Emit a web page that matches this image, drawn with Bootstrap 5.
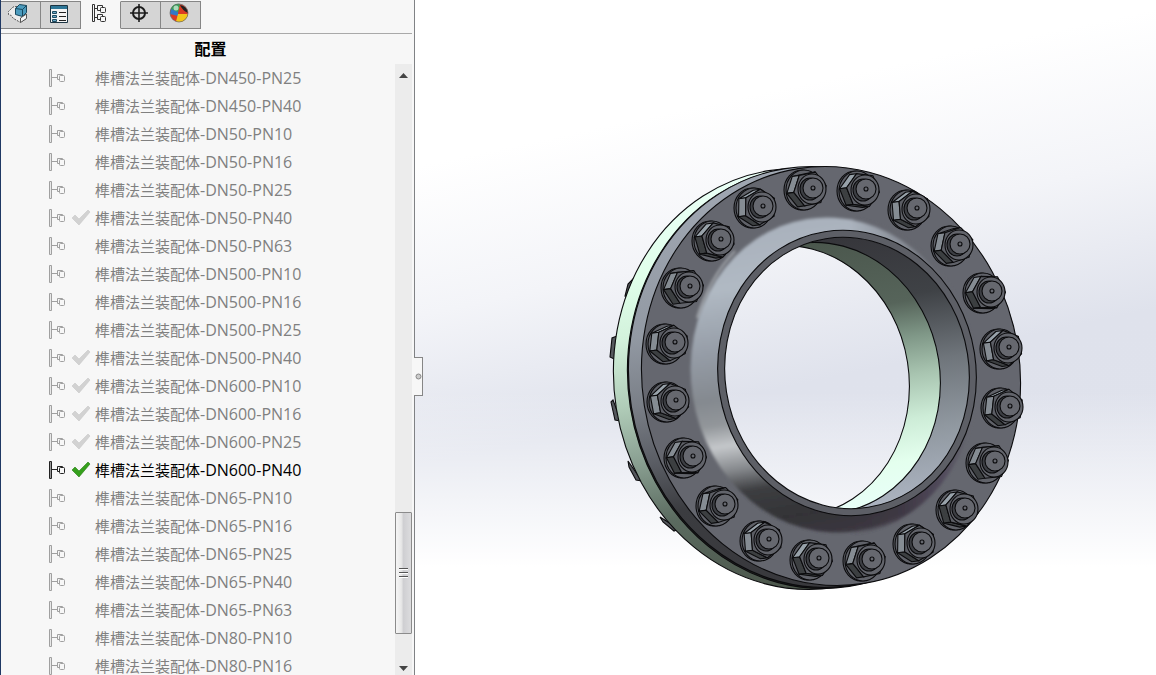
<!DOCTYPE html>
<html lang="zh-CN">
<head>
<meta charset="utf-8">
<meta name="viewport" content="width=device-width, initial-scale=1">
<title>配置</title>
<link href="https://cdn.jsdelivr.net/npm/bootstrap@5.3.0/dist/css/bootstrap.min.css" rel="stylesheet">
<style>
body { font-family: "Open Sans", "Noto Sans CJK SC", sans-serif; color: #000; background: #fff; }
.manager { flex: 0 0 415px; background: #f7f7f7; border-left: 1px solid #1f3864; border-right: 1px solid #808285; }
.tabs { height: 34px; margin-right: 2px; border-bottom: 1px solid #a9a9a9; }
.tab-btn { width: 40px; height: 28px; margin-top: 1px; padding: 0 3px 0 0; background: #d5d5d5; border: 1px solid #868686; border-left: 0; }
.tab-btn.active { background: #f7f7f7; border-color: #f7f7f7; border-right-color: #868686; }
.panel-title { font-size: 16px; line-height: 30px; padding-left: 6px; }
.config-row { height: 28px; padding-left: 47px; color: #808080; font-size: 16px; line-height: 18px; white-space: nowrap; }
.config-row .part { font-size: 15px; }
.config-row .mark-slot { width: 20px; margin: 0 4px 0 3px; }
.config-row .tree-glyph { stroke: #a0a0a0; fill: #e9e9e9; }
.config-row.current { color: #000; }
.config-row.current .tree-glyph { stroke: #222; fill: #999; }
.scrollbar { flex: 0 0 17px; margin-right: 2px; background: #ececec; }
.scroll-btn { height: 18px; background: transparent; }
.above { flex: 431 1 0; }
.below { flex: 23 1 0; }
.thumb { flex: 121 1 0; border: 1px solid #8b8b8b; border-radius: 1px; background: linear-gradient(90deg, #f5f5f5, #e8e8e8 35%, #cfcfd2 50%, #dcdcde); }
.viewport { background: linear-gradient(180deg, transparent 58%, #fff 84%), linear-gradient(168deg, #fff 20%, #f3f4f8 38%, #dfe2ec 56%, #e0e3ed 100%); }
.splitter { left: -1px; top: 53%; width: 9px; height: 39px; margin-top: -1px; background: #f7f7f7; border: 1px solid #868686; border-left: 0; }
.line { stroke: #0b0b0d; stroke-width: 1.1; }
</style>
</head>
<body>
<div class="d-flex vh-100 overflow-hidden">
  <aside class="manager d-flex flex-column overflow-hidden">
    <nav class="tabs d-flex align-items-start flex-shrink-0" aria-label="管理器">
      <button class="tab-btn d-flex justify-content-center" type="button" aria-label="设计树">
        <svg width="24" height="24" viewBox="0 0 24 24"><path d="M10 4.500 6 5 1.500 9.500v3l2 .500 3 3.500 7 4 6-4v-4" fill="#ececec" stroke="#555" stroke-dasharray="2 1"/><path d="M8.500 6.500l4-4 7 1v7l-4 4-7-2z" fill="#4c9bbd" stroke="#17485f"/><path d="M8.500 6.500l7 1 4-4M15.500 7.500v7" fill="none" stroke="#17485f"/><path d="M13.500 16v4.500l6-4V12z" fill="#f6f6f6" stroke="#555"/></svg>
      </button>
      <button class="tab-btn d-flex justify-content-center" type="button" aria-label="属性">
        <svg width="24" height="24" viewBox="0 0 24 24"><path d="M3.500 3.500h17v17h-17z" fill="#f4f4f4" stroke="#1c3442"/><path d="M4 4h16v3H4z" fill="#2d7697"/><path d="M5.500 9.500h4v2h-4zM5.500 13.500h4v2h-4zM5.500 17.500h4v2h-4z" fill="#69a8c4" stroke="#1e4a60"/><path d="M12 10.500h7M12 14.500h7M12 18.500h7" stroke="#222"/></svg>
      </button>
      <button class="tab-btn active d-flex justify-content-center" type="button" aria-label="配置">
        <svg width="24" height="24" viewBox="0 0 24 24" fill="#f7f7f7" stroke="#333"><path d="M5.500 2.500h2v17h-2zM7.500 6.500h4M7.500 15.500h4"/><path d="M10.500 3.500h5v5h-5zM10.500 12.500h5v5h-5z"/><rect x="13.500" y="5.500" width="5" height="5" rx="1"/><rect x="13.500" y="14.500" width="5" height="5" rx="1"/></svg>
      </button>
      <button class="tab-btn d-flex justify-content-center" type="button" aria-label="尺寸专家">
        <svg width="24" height="24" viewBox="0 0 24 24" fill="none" stroke="#1c1c1c" stroke-width="2"><circle cx="12" cy="11" r="6"/><path d="M12 2v18M3 11h18" stroke-width="1.600"/></svg>
      </button>
      <button class="tab-btn d-flex justify-content-center" type="button" aria-label="外观">
        <svg width="24" height="24" viewBox="0 0 24 24"><circle cx="12" cy="11" r="9" fill="#db3b24"/><path d="M11 11 3.500 7A9 9 0 0 1 13 2z" fill="#35a65a"/><path d="M11 10 4 7a9 9 0 0 0-1 5l8 2z" fill="#3279c7"/><path d="M11 12 9 19.500A9 9 0 0 0 21 12z" fill="#f3c51a"/><path d="M13 3q7 1 8 8-6-3-8-8z" fill="#222"/><circle cx="12" cy="11" r="9" fill="none" stroke="#666" stroke-width=".7"/><circle cx="9" cy="6" r="2.500" fill="#fff" opacity=".6"/></svg>
      </button>
    </nav>
    <h1 class="panel-title fw-bold text-center m-0 flex-shrink-0">配置</h1>
    <div class="d-flex flex-grow-1 overflow-hidden">
      <ul id="configs" class="list-unstyled m-0 flex-grow-1"></ul>
      <div class="scrollbar d-flex flex-column">
        <button class="scroll-btn border-0 p-0 pt-1 d-flex justify-content-center align-items-center" type="button" aria-label="向上滚动"><svg width="9" height="5"><path d="M0 5 4.500 0 9 5z" fill="#444"/></svg></button>
        <div class="above"></div>
        <div class="thumb d-flex align-items-center justify-content-center"><svg width="9" height="12"><path d="M0 1.500h9M0 5.500h9M0 9.500h9" stroke="#555"/><path d="M0 2.500h9M0 6.500h9M0 10.500h9" stroke="#fff"/></svg></div>
        <div class="below"></div>
        <button class="scroll-btn border-0 p-0 pt-1 d-flex justify-content-center align-items-center" type="button" aria-label="向下滚动"><svg width="9" height="5"><path d="M0 0h9L4.500 5z" fill="#444"/></svg></button>
      </div>
    </div>
  </aside>
  <main class="viewport position-relative flex-grow-1">
    <button class="splitter position-absolute p-0 d-flex align-items-center justify-content-center" type="button" aria-label="折叠面板"><svg width="7" height="7"><circle cx="3.500" cy="3.500" r="2.500" fill="#ccc" stroke="#888"/></svg></button>
    <svg class="d-block w-100 h-100" viewBox="415 0 741 675" role="img" aria-label="榫槽法兰装配体">
      <defs>
        <linearGradient id="mint" x2="0" y2="1"><stop offset="0" stop-color="#eafff6"/><stop offset=".2" stop-color="#e0ffea"/><stop offset=".34" stop-color="#d3f2dc"/><stop offset=".5" stop-color="#b0ccb8"/><stop offset=".63" stop-color="#8ba193"/><stop offset=".78" stop-color="#5b6b60"/><stop offset="1" stop-color="#4a5449"/></linearGradient>
        <linearGradient id="rim" x2="0" y2="1"><stop offset="0" stop-color="#a0a7b2"/><stop offset=".34" stop-color="#9299a3"/><stop offset=".5" stop-color="#7a7f87"/><stop offset=".64" stop-color="#5a5d64"/><stop offset=".76" stop-color="#3b3c40"/><stop offset="1" stop-color="#38383c"/></linearGradient>
        <linearGradient id="hub" x2="0" y2="1"><stop offset="0" stop-color="#a9b1bc"/><stop offset=".18" stop-color="#b0b9c3"/><stop offset=".38" stop-color="#949ba5"/><stop offset=".52" stop-color="#84898f"/><stop offset=".6" stop-color="#92969a"/><stop offset=".67" stop-color="#c4c7ca"/><stop offset=".75" stop-color="#84878b"/><stop offset=".82" stop-color="#3c3d40"/><stop offset=".92" stop-color="#333336"/><stop offset="1" stop-color="#3b3740"/></linearGradient>
        <linearGradient id="fadeTop" gradientUnits="userSpaceOnUse" x1="850" y1="0" x2="950" y2="0"><stop offset="0" stop-color="#65676f" stop-opacity="0"/><stop offset="1" stop-color="#65676f"/></linearGradient>
        <linearGradient id="fadeBottom" gradientUnits="userSpaceOnUse" x1="850" y1="0" x2="970" y2="0"><stop offset="0" stop-color="#3b3540" stop-opacity="0"/><stop offset=".45" stop-color="#3f3945"/><stop offset=".75" stop-color="#50495a"/><stop offset="1" stop-color="#65676f"/></linearGradient>
        <linearGradient id="bore" x2="0" y2="1"><stop offset="0" stop-color="#36363b"/><stop offset=".25" stop-color="#3f4246"/><stop offset=".5" stop-color="#6f757b"/><stop offset=".75" stop-color="#9098a0"/><stop offset="1" stop-color="#abb3c0"/></linearGradient>
        <linearGradient id="mintBore" x2="0" y2="1"><stop offset="0" stop-color="#4b574d"/><stop offset=".27" stop-color="#56645a"/><stop offset=".4" stop-color="#7f9787"/><stop offset=".54" stop-color="#a8c4b0"/><stop offset=".7" stop-color="#cdecd7"/><stop offset=".85" stop-color="#e4ffee"/><stop offset="1" stop-color="#e8fff8"/></linearGradient>
        <filter id="soft"><feGaussianBlur stdDeviation="1.500"/></filter>
        <clipPath id="openFront"><ellipse cx="847" cy="373" rx="122" ry="136" transform="rotate(-9 847 373)"/></clipPath>
        <clipPath id="hubArea"><ellipse cx="832" cy="375" rx="144" ry="161" transform="rotate(-9 832 375)"/></clipPath>
        <mask id="body" maskUnits="userSpaceOnUse" x="415" y="0" width="741" height="675">
          <path fill="#fff" d="M415 0h741v675H415z"/>
          <g clip-path="url(#openFront)"><ellipse cx="789" cy="381" rx="120" ry="136" transform="rotate(-9 789 381)"/></g>
        </mask>
      </defs>
      <g mask="url(#body)">
        <g fill="#55585d" class="line"><path d="M634 278l-6 6-3 12 8 2zM617 336l-5 2-2 19 6 3zM613 400l-2 2 4 18 6 1zM628 461l1 6 7 13 6 1zM660 517l3 5 11 9 5-2z"/></g>
        <ellipse cx="802" cy="379" rx="188" ry="211" transform="rotate(-9 802 379)" fill="url(#mint)" class="line"/>
        <ellipse cx="816" cy="378" rx="188" ry="211" transform="rotate(-9 816 378)" fill="#222" class="line"/>
        <ellipse cx="818" cy="377" rx="189" ry="211" transform="rotate(-9 818 377)" fill="url(#rim)" class="line"/>
        <ellipse cx="831" cy="376" rx="189" ry="210" transform="rotate(-9 831 376)" fill="#65676f" class="line"/>
        <g filter="url(#soft)">
          <ellipse cx="832" cy="375" rx="141" ry="158" transform="rotate(-9 832 375)" fill="url(#hub)"/>
          <g clip-path="url(#hubArea)"><path d="M850 210h135v165H850z" fill="url(#fadeTop)"/><path d="M850 375h135v165H850z" fill="url(#fadeBottom)"/></g>
          <path d="M697 318q12-40 38-67" fill="none" stroke="#dde2e6" stroke-width="1.500" opacity=".7"/>
        </g>
        <ellipse cx="847" cy="373" rx="129" ry="143" transform="rotate(-9 847 373)" fill="#5d5f66" class="line"/>
        <g clip-path="url(#openFront)">
          <ellipse cx="847" cy="373" rx="122" ry="136" transform="rotate(-9 847 373)" fill="url(#bore)"/>
          <ellipse cx="819" cy="378" rx="121" ry="136" transform="rotate(-9 819 378)" fill="url(#mintBore)" class="line"/>
        </g>
      </g>
      <g clip-path="url(#openFront)"><ellipse cx="789" cy="381" rx="120" ry="136" transform="rotate(-9 789 381)" fill="none" class="line"/></g>
      <ellipse cx="847" cy="373" rx="122" ry="136" transform="rotate(-9 847 373)" fill="none" class="line"/>
      <g id="bolts" class="line"></g>
    </svg>
  </main>
</div>
<script src="https://cdn.jsdelivr.net/npm/bootstrap@5.3.0/dist/js/bootstrap.bundle.min.js"></script>
<script>
// Configuration list: [size and pressure, has saved data]
const configs = [
  ['DN450-PN25'], ['DN450-PN40'], ['DN50-PN10'], ['DN50-PN16'], ['DN50-PN25'], ['DN50-PN40', 1],
  ['DN50-PN63'], ['DN500-PN10'], ['DN500-PN16'], ['DN500-PN25'], ['DN500-PN40', 1], ['DN600-PN10', 1],
  ['DN600-PN16', 1], ['DN600-PN25', 1], ['DN600-PN40', 1], ['DN65-PN10'], ['DN65-PN16'], ['DN65-PN25'],
  ['DN65-PN40'], ['DN65-PN63'], ['DN80-PN10'], ['DN80-PN16']
];
const current = 'DN600-PN40';
document.getElementById('configs').innerHTML = configs.map(([name, saved]) => {
  const on = name === current;
  const tick = saved ? `<svg class="d-block" width="20" height="16" viewBox="0 0 20 16"><path d="M1 8l3-3 4 4L17 0l2 2L8 15z" fill="${on ? '#35a01c' : '#d2d2d2'}" stroke="${on ? '#237a10' : '#c8c8c8'}" stroke-width=".6"/></svg>` : '';
  return `<li class="config-row d-flex align-items-center${on ? ' current' : ''}">
    <svg class="tree-glyph" width="20" height="20" viewBox="0 0 20 20"><path d="M1.500 1.500h2v17h-2z"/><path d="M4 9.500h5" fill="none"/><path d="M9.500 6.500h5v5h-5z" fill="#f7f7f7"/><rect x="11.500" y="7.500" width="5" height="6" rx="1" fill="#f7f7f7"/></svg>
    <span class="mark-slot">${tick}</span><span><span class="part">榫槽法兰装配体</span>-${name}</span></li>`;
}).join('');

// Stud tips, counter-clockwise from the top; every nut is turned 18 degrees from the one before
const studs = [[813,188],[763,206],[721,239],[690,286],[675,342],[676,400],[693,456],[725,504],[769,539],[819,558],
  [872,559],[922,542],[965,508],[995,461],[1010,406],[1009,347],[992,291],[960,244],[917,208],[866,189]];
const hex = (x, y, turn, r) => Array.from({length: 6}, (_, k) => {
  const a = (turn + 60 * k) * Math.PI / 180;
  return [x + r * .97 * Math.cos(a), y - r * 1.05 * Math.sin(a)];
});
const poly = (pts, fill) => `<path d="M${pts.map(p => p.map(v => v.toFixed(1)).join(' ')).join('L')}Z" fill="${fill}"/>`;
document.getElementById('bolts').innerHTML = studs.map(([x, y], i) => {
  const turn = 11 + 18 * i;
  const back = hex(x - 10, y + 2, turn, 17), front = hex(x - 3, y + 1, turn, 17);
  let s = `<ellipse cx="${x - 11}" cy="${y + 2}" rx="18" ry="20" fill="#5b5d64"/><ellipse cx="${x - 9}" cy="${y + 2}" rx="18" ry="20" fill="#606269"/>`;
  for (let k = 0; k < 6; k++) {
    const n = (turn + 60 * k + 30) % 360, j = (k + 1) % 6;
    if (n > 92 && n < 275) s += poly([back[k], back[j], front[j], front[k]], n < 145 ? '#98a2aa' : n < 195 ? '#858c93' : '#3c3f41');
  }
  s += poly(front, '#5c5e65');
  s += `<ellipse cx="${x - 1}" cy="${y + 1}" rx="14" ry="15" fill="#62646b"/>
    <ellipse cx="${x - 3}" cy="${y + 1}" rx="10" ry="11" fill="#3c3e43"/>
    <ellipse cx="${x}" cy="${y}" rx="10" ry="10" fill="#66686f"/>
    <circle cx="${x}" cy="${y}" r="2" fill="#66686f"/>`;
  return s;
}).join('');
</script>
</body>
</html>
